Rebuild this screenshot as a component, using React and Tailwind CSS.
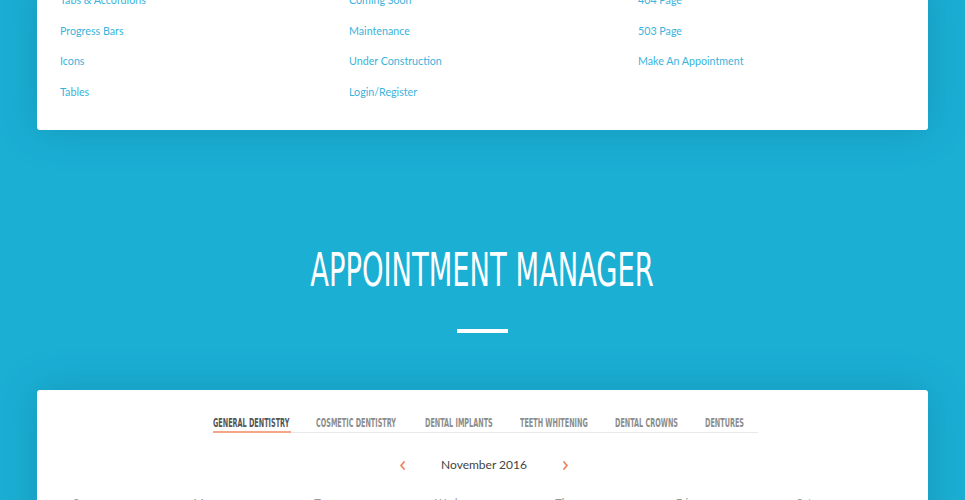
import React from 'react';

const linkColumns = [
  ['Tabs & Accordions', 'Progress Bars', 'Icons', 'Tables'],
  ['Coming Soon', 'Maintenance', 'Under Construction', 'Login/Register'],
  ['404 Page', '503 Page', 'Make An Appointment'],
];

const services = [
  { label: 'General Dentistry', w: 'w-[78px]' },
  { label: 'Cosmetic Dentistry', w: 'w-[84px]' },
  { label: 'Dental Implants', w: 'w-[70px]' },
  { label: 'Teeth Whitening', w: 'w-[70px]' },
  { label: 'Dental Crowns', w: 'w-[65px]' },
  { label: 'Dentures', w: 'w-[40px]' },
];

const weekDays = ['Sun', 'Mon', 'Tue', 'Wed', 'Thu', 'Fri', 'Sat'];

const condensed = { fontFamily: '"DejaVu Sans Condensed", "Liberation Sans", sans-serif' };

const Chevron = ({ dir }) => (
  <svg width="7" height="9" viewBox="0 0 7 9" fill="none">
    <path
      d={dir === 'left' ? 'M5 1 L2 4.5 L5 8' : 'M2 1 L5 4.5 L2 8'}
      stroke="#f0825a"
      strokeWidth="1.8"
      strokeLinecap="round"
      strokeLinejoin="round"
    />
  </svg>
);

const App = () => {
  const active = 0;

  return (
    <div className="min-h-screen bg-[#1bafd4] overflow-hidden" style={{ fontFamily: 'Lato, "Open Sans", sans-serif' }}>
      {/* page links card */}
      <div className="mx-[37px] -mt-[15px] bg-white rounded-b-[3px] shadow-[0_0_40px_rgba(0,70,100,0.22)] pl-[23px] pb-[23px]">
        <div className="grid grid-cols-[289px_289px_1fr]">
          {linkColumns.map((col, i) => (
            <div key={i} className="flex flex-col">
              {col.map((label) => (
                <a key={label} href="#" className="h-[30.5px] flex items-center text-[10.7px] text-[#3ab3dc]">
                  {label}
                </a>
              ))}
            </div>
          ))}
        </div>
      </div>

      {/* section heading */}
      <div className="h-[260px] flex flex-col items-center">
        <h2
          className="mt-[117px] text-[40px] leading-[46px] text-white uppercase scale-x-[0.76] scale-y-[1.14] whitespace-nowrap"
          style={condensed}
        >
          Appointment Manager
        </h2>
        <div className="mt-[36px] w-[51px] h-[4px] bg-white" />
      </div>

      {/* booking card */}
      <div className="mx-[37px] w-[891px] bg-white rounded-t-[3px] shadow-[0_0_40px_rgba(0,70,100,0.22)] pt-[28px] h-[200px]">
        <div className="flex justify-center">
          <div className="flex gap-[25px] border-b border-[#e8e8e8] pr-[13px] ml-[6px]">
            {services.map((s, i) => (
              <button
                key={s.label}
                className={
                  s.w +
                  ' pb-[3px] text-left text-[10px] leading-[10px] font-bold uppercase border-b-2 -mb-px ' +
                  (i === active ? 'text-[#555] border-[#f4a788]' : 'text-[#8c8c8c] border-transparent')
                }
                style={condensed}
              >
                <span className="inline-block whitespace-nowrap origin-left scale-x-[0.72] scale-y-[1.25]">
                  {s.label}
                </span>
              </button>
            ))}
          </div>
        </div>

        <div className="mt-[25px] flex items-center justify-center gap-[35px] ml-[3px]">
          <Chevron dir="left" />
          <span className="whitespace-nowrap text-[12px] leading-[14px] text-[#444]">November 2016</span>
          <Chevron dir="right" />
        </div>

        <div className="mt-[23px] grid grid-cols-7 pl-[36px] pr-[11px] text-[11px] text-[#999]">
          {weekDays.map((d) => (
            <span key={d}>{d}</span>
          ))}
        </div>
      </div>
    </div>
  );
};

export default App;
